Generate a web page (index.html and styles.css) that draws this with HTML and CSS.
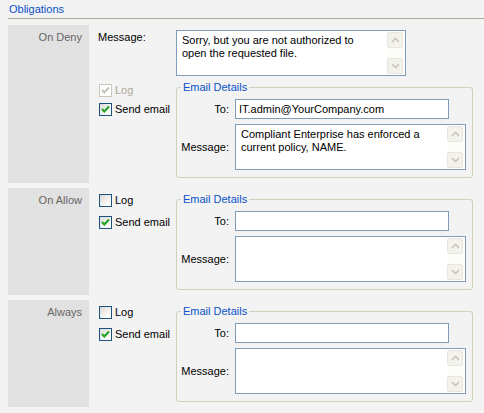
FILE: index.html
```html
<!DOCTYPE html>
<html>
<head>
<meta charset="utf-8">
<link rel="stylesheet" href="styles.css">
</head>
<body>
<div class="title">Obligations</div>

<div class="section">
  <div class="side">On Deny</div>
  <div class="main">
    <div class="msgrow">
      <span class="lbl">Message:</span>
      <div class="ta ta-deny">
        <div class="ta-text">Sorry, but you are not authorized to<br>open the requested file.</div>
        <div class="sb"><span class="btn up"><svg width="9" height="6" viewBox="0 0 9 6"><path d="M1 5 L4.5 1.5 L8 5" fill="none" stroke="#c9c7ba" stroke-width="1.6"/></svg></span><span class="track"></span><span class="btn"><svg width="9" height="6" viewBox="0 0 9 6"><path d="M1 1 L4.5 4.5 L8 1" fill="none" stroke="#c9c7ba" stroke-width="1.6"/></svg></span></div>
      </div>
    </div>
    <div class="row row-first">
      <div class="checks first">
        <div class="chk"><span class="box dis"><svg width="11" height="11" viewBox="0 0 11 11"><path d="M2 5 L4.3 7.5 L9 2.5" fill="none" stroke="#c4c2b6" stroke-width="2"/></svg></span><span class="dim">Log</span></div>
        <div class="chk"><span class="box"><svg width="11" height="11" viewBox="0 0 11 11"><path d="M2 5 L4.3 7.5 L9 2.5" fill="none" stroke="#21a121" stroke-width="2"/></svg></span><span>Send email</span></div>
      </div>
      <fieldset class="email">
        <legend>Email Details</legend>
        <div class="grid">
          <span class="flbl">To:</span>
          <div class="inp">IT.admin@YourCompany.com</div>
          <span class="flbl">Message:</span>
          <div class="ta ta-mail">
            <div class="ta-text">Compliant Enterprise has enforced a<br>current policy, NAME.</div>
            <div class="sb"><span class="btn up"><svg width="9" height="6" viewBox="0 0 9 6"><path d="M1 5 L4.5 1.5 L8 5" fill="none" stroke="#c9c7ba" stroke-width="1.6"/></svg></span><span class="track"></span><span class="btn"><svg width="9" height="6" viewBox="0 0 9 6"><path d="M1 1 L4.5 4.5 L8 1" fill="none" stroke="#c9c7ba" stroke-width="1.6"/></svg></span></div>
          </div>
        </div>
      </fieldset>
    </div>
  </div>
</div>

<div class="section">
  <div class="side">On Allow</div>
  <div class="main">
    <div class="row">
      <div class="checks">
        <div class="chk"><span class="box"></span><span>Log</span></div>
        <div class="chk"><span class="box"><svg width="11" height="11" viewBox="0 0 11 11"><path d="M2 5 L4.3 7.5 L9 2.5" fill="none" stroke="#21a121" stroke-width="2"/></svg></span><span>Send email</span></div>
      </div>
      <fieldset class="email">
        <legend>Email Details</legend>
        <div class="grid">
          <span class="flbl">To:</span>
          <div class="inp"></div>
          <span class="flbl">Message:</span>
          <div class="ta ta-mail">
            <div class="ta-text"></div>
            <div class="sb"><span class="btn up"><svg width="9" height="6" viewBox="0 0 9 6"><path d="M1 5 L4.5 1.5 L8 5" fill="none" stroke="#c9c7ba" stroke-width="1.6"/></svg></span><span class="track"></span><span class="btn"><svg width="9" height="6" viewBox="0 0 9 6"><path d="M1 1 L4.5 4.5 L8 1" fill="none" stroke="#c9c7ba" stroke-width="1.6"/></svg></span></div>
          </div>
        </div>
      </fieldset>
    </div>
  </div>
</div>

<div class="section">
  <div class="side">Always</div>
  <div class="main">
    <div class="row">
      <div class="checks">
        <div class="chk"><span class="box"></span><span>Log</span></div>
        <div class="chk"><span class="box"><svg width="11" height="11" viewBox="0 0 11 11"><path d="M2 5 L4.3 7.5 L9 2.5" fill="none" stroke="#21a121" stroke-width="2"/></svg></span><span>Send email</span></div>
      </div>
      <fieldset class="email">
        <legend>Email Details</legend>
        <div class="grid">
          <span class="flbl">To:</span>
          <div class="inp"></div>
          <span class="flbl">Message:</span>
          <div class="ta ta-mail">
            <div class="ta-text"></div>
            <div class="sb"><span class="btn up"><svg width="9" height="6" viewBox="0 0 9 6"><path d="M1 5 L4.5 1.5 L8 5" fill="none" stroke="#c9c7ba" stroke-width="1.6"/></svg></span><span class="track"></span><span class="btn"><svg width="9" height="6" viewBox="0 0 9 6"><path d="M1 1 L4.5 4.5 L8 1" fill="none" stroke="#c9c7ba" stroke-width="1.6"/></svg></span></div>
          </div>
        </div>
      </fieldset>
    </div>
  </div>
</div>
</body>
</html>
```

FILE: styles.css
```css
* { box-sizing: border-box; }
html, body { margin: 0; padding: 0; }
body {
  background: #f3f3f3;
  font-family: "Liberation Sans", Arial, sans-serif;
  font-size: 11px;
  line-height: 13px;
  color: #000;
  width: 484px;
  height: 413px;
  overflow: hidden;
}
.title {
  margin-left: 8px;
  padding: 3px 0 0 1px;
  height: 19px;
  border-bottom: 1px solid #aca899;
  color: #0b4fc8;
  margin-bottom: 6px;
}
.section {
  margin-left: 8px;
  display: flex;
  margin-bottom: 5px;
}
.side {
  width: 81px;
  flex: none;
  background: #e1e1e1;
  text-align: right;
  padding: 6px 7px 0 0;
  color: #666;
}
.main {
  padding: 5px 0 5px 9px;
}
.msgrow {
  display: flex;
}
.lbl {
  width: 78px;
  flex: none;
  padding-top: 1px;
}
.ta {
  display: flex;
  background: #fff;
  border: 1px solid #7f9db9;
  height: 46px;
}
.ta-deny { width: 230px; }
.ta-mail { width: 231px; }
.ta-text {
  flex: 1;
  padding: 3px 4px 0 5px;
  white-space: nowrap;
}
.sb {
  width: 18px;
  flex: none;
  display: flex;
  flex-direction: column;
  padding: 1px 1px 1px 0;
}
.btn {
  width: 16px;
  height: 16px;
  flex: none;
  border: 1px solid #e8e6dc;
  border-radius: 2px;
  background: #f3f2ec;
  display: flex;
  align-items: center;
  justify-content: center;
}
.track {
  flex: 1;
  background: #fcfcf8;
}
.row {
  display: flex;
}
.row-first { margin-top: 5px; }
.checks {
  width: 78px;
  flex: none;
  padding: 1px 0 0 1px;
}
.checks.first { padding-top: 3px; }
.chk {
  display: flex;
  align-items: center;
  height: 13px;
  margin-bottom: 9px;
}
.checks.first .chk { margin-bottom: 6px; }
.box {
  width: 13px;
  height: 13px;
  border: 1px solid #1c5180;
  background: linear-gradient(135deg, #dcdcd7 0%, #f4f4f0 60%, #fff 100%);
  margin-right: 3px;
  display: flex;
  align-items: center;
  justify-content: center;
  flex: none;
}
.box.dis {
  border-color: #cac8bb;
  background: #fff;
}
.dim { color: #aca899; }
.email {
  margin: 0;
  width: 297px;
  border: 1px solid #d0d0bf;
  border-radius: 3px;
  padding: 5px 6px 7px 0;
}
.email legend {
  color: #0b4fc8;
  padding: 0 2px;
  margin-left: 4px;
}
.grid {
  display: grid;
  grid-template-columns: 52px auto;
  column-gap: 6px;
  row-gap: 5px;
  align-items: center;
}
.flbl {
  text-align: right;
}
.inp {
  width: 214px;
  height: 20px;
  border: 1px solid #7f9db9;
  background: #fff;
  padding: 3px 0 0 3px;
}
```
